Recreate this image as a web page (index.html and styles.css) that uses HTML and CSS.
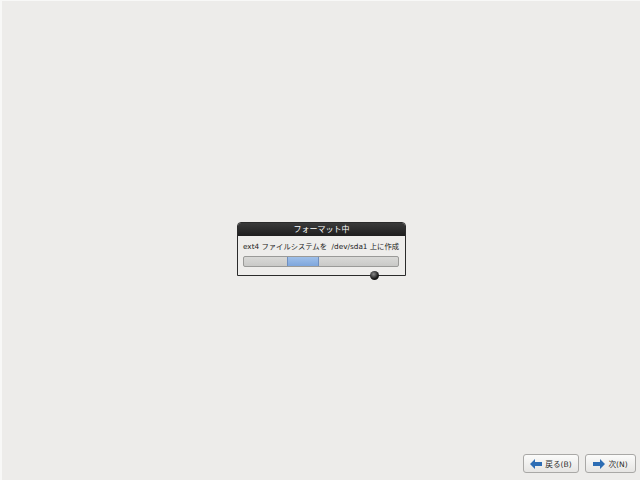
FILE: index.html
```html
<!DOCTYPE html>
<html lang="ja">
<head>
    <meta charset="UTF-8">
    <title>フォーマット中</title>
    <link rel="stylesheet" href="styles.css">
</head>
<body>
    <div class="screen">
        <div class="stage">
            <div class="dialog">
                <div class="dialog-title">フォーマット中</div>
                <div class="dialog-body">
                    <p class="dialog-text">ext4 ファイルシステムを&nbsp; /dev/sda1 上に作成</p>
                    <div class="progress">
                        <div class="progress-chunk"></div>
                    </div>
                </div>
                <span class="busy-dot"></span>
            </div>
        </div>

        <div class="footer">
            <button class="btn btn-back">
                <svg class="arrow" width="12" height="10" viewBox="0 0 12 10">
                    <path d="M0 5 L5 0 L5 3 L12 3 L12 7 L5 7 L5 10 Z" fill="#2d6db4"/>
                </svg>
                戻る(B)
            </button>
            <button class="btn btn-next">
                <svg class="arrow" width="12" height="10" viewBox="0 0 12 10">
                    <path d="M12 5 L7 0 L7 3 L0 3 L0 7 L7 7 L7 10 Z" fill="#2d6db4"/>
                </svg>
                次(N)
            </button>
        </div>
    </div>
</body>
</html>
```

FILE: styles.css
```css
* {
    margin: 0;
    padding: 0;
    box-sizing: border-box;
}

body {
    font-family: "DejaVu Sans", "Noto Sans CJK JP", sans-serif;
    background: #edecea;
    width: 640px;
    height: 480px;
    overflow: hidden;
}

.screen {
    height: 480px;
    display: flex;
    flex-direction: column;
    border-top: 1px solid #f8f8f7;
    border-left: 2px solid #f8f8f7;
}

.stage {
    flex: 1;
    display: flex;
    justify-content: center;
    align-items: flex-start;
    padding-top: 221px;
    padding-left: 1px;
}

.dialog {
    position: relative;
    width: 169px;
    background: #eeedeb;
    border: 1px solid #2b2b2b;
    border-radius: 4px 4px 0 0;
}

.dialog-title {
    background: linear-gradient(#3a3a3a, #1e1e1e);
    color: #ffffff;
    font-size: 8px;
    height: 13px;
    line-height: 13px;
    text-align: center;
    border-radius: 3px 3px 0 0;
}

.dialog-body {
    padding: 6px 6px 8px 5px;
}

.dialog-text {
    font-size: 7.3px;
    color: #222222;
    line-height: 10px;
    white-space: nowrap;
    margin-bottom: 4px;
}

.progress {
    height: 11px;
    background: linear-gradient(#d9d9d7, #c9c9c7);
    border: 1px solid #9a9a98;
    border-radius: 2px;
    padding-left: 43px;
}

.progress-chunk {
    width: 32px;
    height: 100%;
    background: linear-gradient(#9fc0ea, #7ea6dc);
    border-left: 1px solid #6f8fbf;
    border-right: 1px solid #6f8fbf;
}

.busy-dot {
    position: absolute;
    left: 132px;
    bottom: -5px;
    width: 9px;
    height: 9px;
    border-radius: 50%;
    background: radial-gradient(circle at 40% 35%, #8a8a8a, #151515 60%);
}

.footer {
    display: flex;
    justify-content: flex-end;
    gap: 6px;
    padding: 0 4px 7px 0;
}

.btn {
    display: flex;
    align-items: center;
    justify-content: center;
    gap: 3px;
    height: 19px;
    background: linear-gradient(#fbfbfa, #e6e5e3);
    border: 1px solid #a9a8a6;
    border-radius: 3px;
    font-family: "DejaVu Sans", "Noto Sans CJK JP", sans-serif;
    font-size: 7.6px;
    color: #2e2e2e;
}

.btn-back {
    width: 56px;
}

.btn-next {
    width: 51px;
}
```
